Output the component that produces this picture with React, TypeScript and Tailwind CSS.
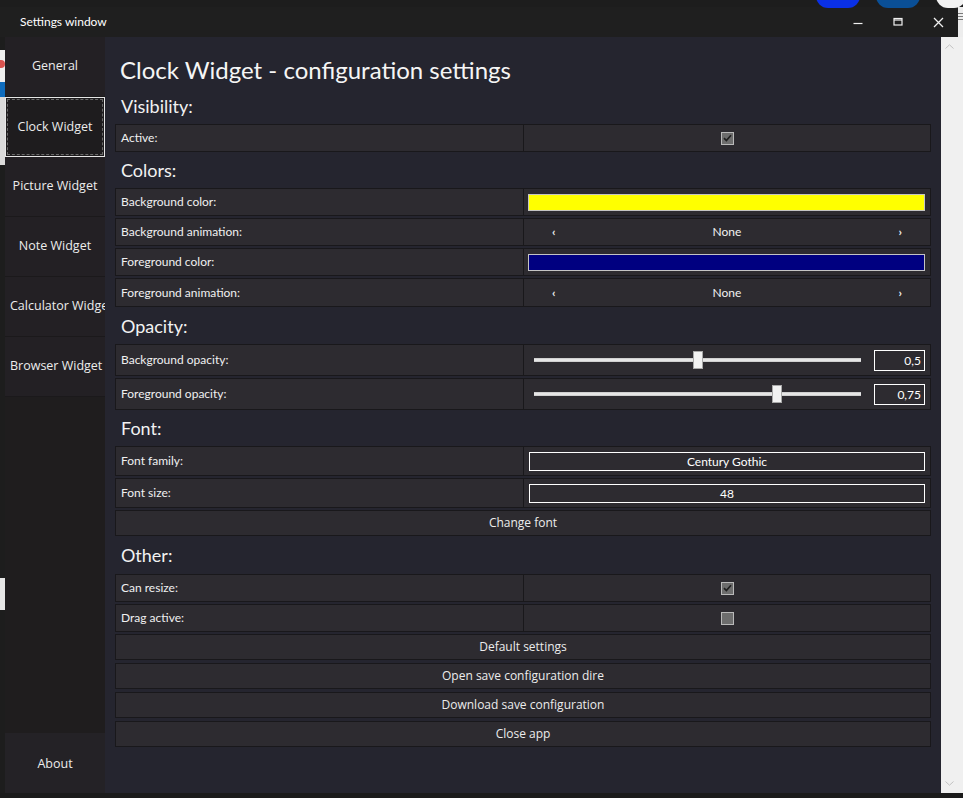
import React from 'react';

const sans = "font-['Lato','Noto_Sans',sans-serif]";
const gothic = "font-['Open_Sans','Lato',sans-serif]";

const navItems = ['General', 'Clock Widget', 'Picture Widget', 'Note Widget', 'Calculator Widget', 'Browser Widget'];

function Check({ checked }: { checked: boolean }) {
  return (
    <div className="w-[13px] h-[13px] bg-[#6d6d6d] border border-[#b9b9b9] flex items-center justify-center">
      {checked && (
        <svg width="9" height="8" viewBox="0 0 9 8">
          <path d="M1 4.2 L3.4 6.6 L8 1.3" stroke="#1f1f1f" strokeWidth="1.7" fill="none" />
        </svg>
      )}
    </div>
  );
}

function Row({ label, h, children }: { label: string; h: string; children: React.ReactNode }) {
  return (
    <div className={`grid grid-cols-2 border border-[#19181b] bg-[#2d2b30] ${h}`}>
      <div className={`flex items-center pl-[5px] text-[12px] text-[#f0f0f0] ${sans}`}>{label}</div>
      <div className="border-l border-[#19181b] min-w-0">{children}</div>
    </div>
  );
}

function Header({ text, h }: { text: string; h: string }) {
  return (
    <div className={`flex items-center pl-[6px] text-[18px] leading-[24px] text-[#f2f2f2] ${sans} ${h}`}>{text}</div>
  );
}

function Swatch({ color }: { color: string }) {
  return (
    <div className="h-full flex items-center pl-[4px] pr-[5px]">
      <div className={`w-full h-[17px] border border-[#c4c4c4] ${color}`}></div>
    </div>
  );
}

function Animation() {
  return (
    <div className={`h-full flex items-center justify-between px-[28px] text-[12px] text-[#f0f0f0] ${sans}`}>
      <span className="text-[12px] font-bold">‹</span>
      <span>None</span>
      <span className="text-[12px] font-bold">›</span>
    </div>
  );
}

function Slider({ value, text }: { value: number; text: string }) {
  return (
    <div className="h-full flex items-center pl-[10px] pr-[5px]">
      <div className="relative w-[327px] h-[18px] flex items-center">
        <div className="w-full h-[4px] bg-[#e6e6e6] border-y border-[#d0d0d0]"></div>
        <div
          className="absolute top-0 w-[10px] h-[18px] bg-[#f2f2f2] border border-[#a8a8a8]"
          style={{ left: value * 317 }}
        ></div>
      </div>
      <div className={`ml-auto w-[51px] h-[21px] border border-white text-right pr-[3px] text-[12px] leading-[19px] text-white ${sans}`}>
        {text}
      </div>
    </div>
  );
}

function TextBox({ text }: { text: string }) {
  return (
    <div className="h-full flex items-center pl-[5px] pr-[5px]">
      <div className={`w-full h-[19px] border border-white text-center text-[12px] leading-[17px] text-white ${sans}`}>{text}</div>
    </div>
  );
}

function Centered({ children }: { children: React.ReactNode }) {
  return <div className="h-full flex items-center justify-center">{children}</div>;
}

function Button({ text, h }: { text: string; h: string }) {
  return (
    <div className={`flex items-center justify-center border border-[#19181b] bg-[#2d2b30] text-[12px] text-[#ececec] ${gothic} ${h}`}>
      {text}
    </div>
  );
}

export default function App() {
  const selected = 'Clock Widget';

  return (
    <div className="relative w-[963px] h-[798px] bg-[#1d1d1d] overflow-hidden flex flex-col">
      {/* desktop bits peeking above the window */}
      <div className="absolute top-[-16px] left-[816px] w-[44px] h-[24px] rounded-full bg-[#0a30e6]"></div>
      <div className="absolute top-[-16px] left-[876px] w-[44px] h-[24px] rounded-full bg-[#0a4f96]"></div>
      <div className="absolute top-[-16px] left-[936px] w-[30px] h-[24px] rounded-full bg-[#f2f2f2]"></div>

      {/* Title bar */}
      <div className="flex h-[37px] shrink-0">
        <div className="flex-1 flex items-end bg-[#1f1f1f] mt-[7px]">
          <div className="flex-1 h-[30px] flex items-center">
            <span className={`pl-[20px] text-[12px] text-white ${sans}`}>Settings window</span>
            <div className="ml-auto flex items-center h-full">
              <div className="w-[40px] h-full flex items-center justify-center">
                <svg width="10" height="10" viewBox="0 0 10 10">
                  <path d="M0.5 6.5 H9.5" stroke="#f0f0f0" strokeWidth="1.2" />
                </svg>
              </div>
              <div className="w-[40px] h-full flex items-center justify-center">
                <svg width="10" height="10" viewBox="0 0 10 10">
                  <rect x="1" y="1.5" width="8" height="6.5" stroke="#f0f0f0" strokeWidth="1.2" fill="none" />
                  <path d="M1 3 H9" stroke="#f0f0f0" strokeWidth="1.2" />
                </svg>
              </div>
              <div className="w-[40px] h-full flex items-center justify-center">
                <svg width="11" height="11" viewBox="0 0 11 11">
                  <path d="M1 1 L10 10 M10 1 L1 10" stroke="#f0f0f0" strokeWidth="1.3" />
                </svg>
              </div>
            </div>
          </div>
        </div>
        <div className="w-[5px] mt-[7px] bg-[#ededed] flex flex-col gap-[2px] pt-[6px]">
          <div className="h-[1px] bg-[#7a7a7a]"></div>
          <div className="h-[1px] bg-[#7a7a7a]"></div>
          <div className="h-[1px] bg-[#7a7a7a]"></div>
        </div>
      </div>

      {/* Body */}
      <div className="flex h-[756px] shrink-0">
        {/* desktop strip on the left */}
        <div className="w-[5px] flex flex-col">
          <div className="h-[13px]"></div>
          <div className="h-[32px] bg-[#efefef]">
            <div className="mt-[10px] w-[5px] h-[8px] rounded-r-full bg-[#d9534f]"></div>
          </div>
          <div className="h-[15px] bg-[#0f6cbd]"></div>
          <div className="h-[68px] bg-[#dadada]"></div>
          <div className="h-[413px]"></div>
          <div className="h-[32px] bg-[#e6e6e6]"></div>
        </div>

        {/* Sidebar */}
        <div className={`w-[100px] flex flex-col bg-[#1f1d1e] ${gothic}`}>
          {navItems.map((item) =>
            item === selected ? (
              <div key={item} className="h-[60px] border border-[#e6e6e6] bg-[#1e1c1e] p-[1px]">
                <div className="h-full border border-dashed border-[#6a6a6a] flex items-center justify-center text-[12.5px] text-[#ececec]">
                  {item}
                </div>
              </div>
            ) : (
              <div
                key={item}
                className="h-[60px] border-b border-[#1b191b] bg-[#232024] flex items-center justify-center px-[5px] overflow-hidden whitespace-nowrap text-[12.5px] text-[#ececec]"
              >
                <span className="min-w-0">{item}</span>
              </div>
            )
          )}
          <div className="flex-1"></div>
          <div className="h-[60px] bg-[#242226] flex items-center justify-center pt-[3px] text-[12.5px] text-[#ececec]">About</div>
        </div>

        {/* Main content */}
        <div className="flex-1 bg-[#25252f] px-[10px] pt-[16px] flex flex-col">
          <div className={`h-[34px] pl-[5px] flex items-center text-[24px] text-[#f5f5f5] ${sans}`}>
            Clock Widget - configuration settings
          </div>

          <Header text="Visibility:" h="h-[37px]" />
          <Row label="Active:" h="h-[28px]">
            <Centered>
              <Check checked />
            </Centered>
          </Row>

          <Header text="Colors:" h="h-[36px]" />
          <div className="flex flex-col gap-[2px]">
            <Row label="Background color:" h="h-[28px]">
              <Swatch color="bg-[#ffff00]" />
            </Row>
            <Row label="Background animation:" h="h-[28px]">
              <Animation />
            </Row>
            <Row label="Foreground color:" h="h-[28px]">
              <Swatch color="bg-[#000080]" />
            </Row>
            <Row label="Foreground animation:" h="h-[29px]">
              <Animation />
            </Row>
          </div>

          <Header text="Opacity:" h="h-[37px]" />
          <div className="flex flex-col gap-[2px]">
            <Row label="Background opacity:" h="h-[32px]">
              <Slider value={0.5} text="0,5" />
            </Row>
            <Row label="Foreground opacity:" h="h-[32px]">
              <Slider value={0.75} text="0,75" />
            </Row>
          </div>

          <Header text="Font:" h="h-[36px]" />
          <div className="flex flex-col gap-[2px]">
            <Row label="Font family:" h="h-[30px]">
              <TextBox text="Century Gothic" />
            </Row>
            <Row label="Font size:" h="h-[30px]">
              <TextBox text="48" />
            </Row>
            <Button text="Change font" h="h-[26px]" />
          </div>

          <Header text="Other:" h="h-[38px]" />
          <div className="flex flex-col gap-[2px]">
            <Row label="Can resize:" h="h-[28px]">
              <Centered>
                <Check checked />
              </Centered>
            </Row>
            <Row label="Drag active:" h="h-[28px]">
              <Centered>
                <Check checked={false} />
              </Centered>
            </Row>
          </div>
          <div className="flex flex-col gap-[3px] mt-[2px]">
            <Button text="Default settings" h="h-[26px]" />
            <Button text="Open save configuration dire" h="h-[26px]" />
            <Button text="Download save configuration" h="h-[26px]" />
            <Button text="Close app" h="h-[26px]" />
          </div>
        </div>

        {/* Scrollbar + desktop strip on the right */}
        <div className="w-[22px] bg-[#f0f0f0] flex">
          <div className="w-[17px] flex flex-col items-center justify-between py-[7px]">
            <svg width="9" height="5" viewBox="0 0 9 5">
              <path d="M0.5 4.5 L4.5 0.8 L8.5 4.5" stroke="#c2c2c2" strokeWidth="1" fill="none" />
            </svg>
            <svg width="9" height="5" viewBox="0 0 9 5">
              <path d="M0.5 0.5 L4.5 4.2 L8.5 0.5" stroke="#c2c2c2" strokeWidth="1" fill="none" />
            </svg>
          </div>
        </div>
      </div>

      <div className="flex-1 bg-[#1b1b1b]"></div>
    </div>
  );
}
